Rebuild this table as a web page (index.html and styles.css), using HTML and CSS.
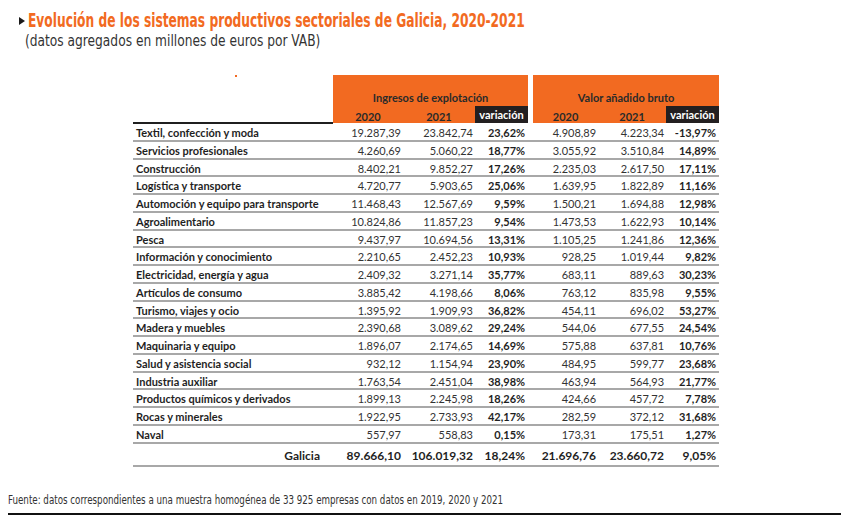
FILE: index.html
```html
<!DOCTYPE html>
<html lang="es">
<head>
<meta charset="utf-8">
<link rel="stylesheet" href="styles.css">
</head>
<body>
<div class="page">
  <header class="head">
    <h1 class="title"><span class="tri"></span><span class="title-text">Evolución de los sistemas productivos sectoriales de Galicia, 2020-2021</span></h1>
    <p class="subtitle"><span class="sub-text">(datos agregados en millones de euros por VAB)</span></p>
  </header>
  <table class="tbl">
    <colgroup>
      <col class="c-lab"><col class="c-a"><col class="c-b"><col class="c-v">
      <col class="c-gap"><col class="c-d"><col class="c-e"><col class="c-v">
    </colgroup>
    <thead>
      <tr class="h1">
        <th class="lab-h" rowspan="2"><span class="dot"></span></th>
        <th class="grp" colspan="3">Ingresos de explotación</th>
        <th class="gap-h" rowspan="2"></th>
        <th class="grp" colspan="3">Valor añadido bruto</th>
      </tr>
      <tr class="h2">
        <th class="yr">2020</th><th class="yr">2021</th><th class="var-h">variación</th>
        <th class="yr">2020</th><th class="yr">2021</th><th class="var-h">variación</th>
      </tr>
    </thead>
    <tbody>
      <tr><td class="lab">Textil, confección y moda</td><td>19.287,39</td><td>23.842,74</td><td class="v">23,62%</td><td class="g"></td><td>4.908,89</td><td>4.223,34</td><td class="v">-13,97%</td></tr>
      <tr><td class="lab">Servicios profesionales</td><td>4.260,69</td><td>5.060,22</td><td class="v">18,77%</td><td class="g"></td><td>3.055,92</td><td>3.510,84</td><td class="v">14,89%</td></tr>
      <tr><td class="lab">Construcción</td><td>8.402,21</td><td>9.852,27</td><td class="v">17,26%</td><td class="g"></td><td>2.235,03</td><td>2.617,50</td><td class="v">17,11%</td></tr>
      <tr><td class="lab">Logística y transporte</td><td>4.720,77</td><td>5.903,65</td><td class="v">25,06%</td><td class="g"></td><td>1.639,95</td><td>1.822,89</td><td class="v">11,16%</td></tr>
      <tr><td class="lab">Automoción y equipo para transporte</td><td>11.468,43</td><td>12.567,69</td><td class="v">9,59%</td><td class="g"></td><td>1.500,21</td><td>1.694,88</td><td class="v">12,98%</td></tr>
      <tr><td class="lab">Agroalimentario</td><td>10.824,86</td><td>11.857,23</td><td class="v">9,54%</td><td class="g"></td><td>1.473,53</td><td>1.622,93</td><td class="v">10,14%</td></tr>
      <tr><td class="lab">Pesca</td><td>9.437,97</td><td>10.694,56</td><td class="v">13,31%</td><td class="g"></td><td>1.105,25</td><td>1.241,86</td><td class="v">12,36%</td></tr>
      <tr><td class="lab">Información y conocimiento</td><td>2.210,65</td><td>2.452,23</td><td class="v">10,93%</td><td class="g"></td><td>928,25</td><td>1.019,44</td><td class="v">9,82%</td></tr>
      <tr><td class="lab">Electricidad, energía y agua</td><td>2.409,32</td><td>3.271,14</td><td class="v">35,77%</td><td class="g"></td><td>683,11</td><td>889,63</td><td class="v">30,23%</td></tr>
      <tr><td class="lab">Artículos de consumo</td><td>3.885,42</td><td>4.198,66</td><td class="v">8,06%</td><td class="g"></td><td>763,12</td><td>835,98</td><td class="v">9,55%</td></tr>
      <tr><td class="lab">Turismo, viajes y ocio</td><td>1.395,92</td><td>1.909,93</td><td class="v">36,82%</td><td class="g"></td><td>454,11</td><td>696,02</td><td class="v">53,27%</td></tr>
      <tr><td class="lab">Madera y muebles</td><td>2.390,68</td><td>3.089,62</td><td class="v">29,24%</td><td class="g"></td><td>544,06</td><td>677,55</td><td class="v">24,54%</td></tr>
      <tr><td class="lab">Maquinaria y equipo</td><td>1.896,07</td><td>2.174,65</td><td class="v">14,69%</td><td class="g"></td><td>575,88</td><td>637,81</td><td class="v">10,76%</td></tr>
      <tr><td class="lab">Salud y asistencia social</td><td>932,12</td><td>1.154,94</td><td class="v">23,90%</td><td class="g"></td><td>484,95</td><td>599,77</td><td class="v">23,68%</td></tr>
      <tr><td class="lab">Industria auxiliar</td><td>1.763,54</td><td>2.451,04</td><td class="v">38,98%</td><td class="g"></td><td>463,94</td><td>564,93</td><td class="v">21,77%</td></tr>
      <tr><td class="lab">Productos químicos y derivados</td><td>1.899,13</td><td>2.245,98</td><td class="v">18,26%</td><td class="g"></td><td>424,66</td><td>457,72</td><td class="v">7,78%</td></tr>
      <tr><td class="lab">Rocas y minerales</td><td>1.922,95</td><td>2.733,93</td><td class="v">42,17%</td><td class="g"></td><td>282,59</td><td>372,12</td><td class="v">31,68%</td></tr>
      <tr><td class="lab">Naval</td><td>557,97</td><td>558,83</td><td class="v">0,15%</td><td class="g"></td><td>173,31</td><td>175,51</td><td class="v">1,27%</td></tr>
      <tr class="tot"><td class="lab">Galicia</td><td>89.666,10</td><td>106.019,32</td><td class="v">18,24%</td><td class="g"></td><td>21.696,76</td><td>23.660,72</td><td class="v">9,05%</td></tr>
    </tbody>
  </table>
  <footer class="foot"><span class="foot-text">Fuente: datos correspondientes a una muestra homogénea de 33 925 empresas con datos en 2019, 2020 y 2021</span></footer>
</div>
</body>
</html>
```

FILE: styles.css
```css
html, body {
  margin: 0;
  padding: 0;
  background: #fff;
}
.page {
  width: 852px;
  height: 529px;
  padding: 8px 0 0 0;
  box-sizing: border-box;
  font-family: "DejaVu Sans Condensed", "Liberation Sans", sans-serif;
  color: #222;
  overflow: hidden;
}
.head {
  padding-left: 19px;
}
.title {
  margin: 0;
  font-size: 20px;
  font-weight: bold;
  color: #f26a21;
  line-height: 24px;
  display: flex;
  align-items: center;
  gap: 3px;
  white-space: nowrap;
}
.title-text {
  display: inline-block;
  transform: scaleX(0.68);
  transform-origin: left center;
}
.tri {
  flex: none;
  width: 0;
  height: 0;
  border-top: 4px solid transparent;
  border-bottom: 4px solid transparent;
  border-left: 6px solid #1a1a1a;
  margin-top: 1px;
}
.subtitle {
  margin: 0;
  padding-left: 6px;
  font-size: 16px;
  line-height: 18px;
  color: #333;
  white-space: nowrap;
}
.sub-text {
  display: inline-block;
  transform: scaleX(0.85);
  transform-origin: left center;
}
.tbl {
  margin: 25px 0 0 133px;
  border-collapse: collapse;
  table-layout: fixed;
  width: 586px;
  font-family: "Lato", "Noto Sans", sans-serif;
  font-size: 11px;
}
.c-lab { width: 200px; }
.c-a { width: 70px; }
.c-b { width: 72px; }
.c-v { width: 53px; }
.c-gap { width: 5px; }
.c-d { width: 65px; }
.c-e { width: 68px; }
.tbl th {
  padding: 0;
  font-weight: bold;
  color: #2a2a2a;
}
.lab-h {
  position: relative;
  border-bottom: 2px solid #1f1f1f;
}
.dot {
  position: absolute;
  left: 102px;
  top: 0;
  width: 2px;
  height: 2px;
  background: #f26a21;
}
.grp {
  background: #f26a21;
  height: 30px;
  vertical-align: bottom;
  line-height: 14px;
  padding-bottom: 1px !important;
}
.h2 th {
  height: 17px;
}
.yr {
  background: #f26a21;
  line-height: 13px;
  vertical-align: bottom;
}
.var-h {
  background: #231f20;
  color: #fff !important;
  line-height: 15px;
}
.gap-h {
  background: #fff;
}
.tbl td {
  padding: 1.5px 2px 0 0;
  height: 14.25px;
  line-height: 13px;
  text-align: right;
  color: #333;
  border-bottom: 2px solid #a8a8a8;
  white-space: nowrap;
}
.tbl td.lab {
  text-align: left;
  padding-left: 3px;
  font-weight: bold;
  color: #1f1f1f;
}
.tbl td.v {
  font-weight: bold;
  color: #1f1f1f;
  padding-right: 3px;
}
.tbl td.g {
  padding: 0;
}
.tot td {
  height: 18px;
  padding-top: 3px;
  font-weight: bold;
  color: #1f1f1f;
  font-size: 12px;
}
.tot td.lab {
  text-align: right;
  padding-right: 13px;
}
.foot {
  margin: 25px 11px 0 8px;
  padding-bottom: 5px;
  border-bottom: 2px solid #111;
  font-size: 13px;
  color: #333;
  line-height: 16px;
  white-space: nowrap;
}
.foot-text {
  display: inline-block;
  transform: scaleX(0.745);
  transform-origin: left center;
}
```
